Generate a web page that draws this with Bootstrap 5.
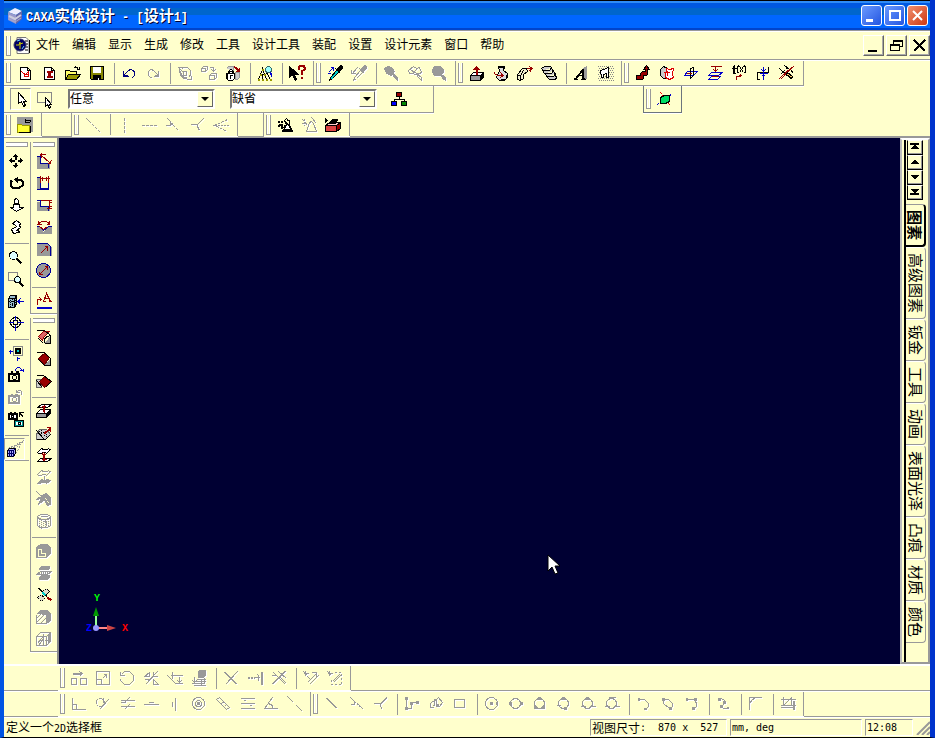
<!DOCTYPE html>
<html lang="zh-CN">
<head>
<meta charset="utf-8">
<meta name="viewport" content="width=device-width, initial-scale=1">
<title>CAXA实体设计 - [设计1]</title>
<link href="https://cdn.jsdelivr.net/npm/bootstrap@5.3.0/dist/css/bootstrap.min.css" rel="stylesheet">
<style>
:root{--face:#ffffcc;--line:#999;--navy:#000033}
body{background:var(--face);color:#000;font:12px/16px "Liberation Sans","Noto Sans CJK SC",sans-serif}
.shell{border-left:4px solid #0054e3;border-right:5px solid #0033cc;border-bottom:1px solid #000}
.titlebar{height:30px;margin:0 -5px 0 -4px;padding:0 7px 0 6px;border-top:1px solid #000;background:linear-gradient(#2f8cf5 0 2px,#0058e0 2px 7px,#0066cc 7px 14px,#0066ff 14px 27px,#0044cc 27px)}
.titlebar h1{font:bold 15px/18px "Noto Sans CJK SC",sans-serif;color:#fff;text-shadow:1px 1px #003;white-space:pre;padding-top:2px;margin:0 0 0 2px}
.titlebar h1 span{font-family:"Liberation Mono",monospace;font-size:12px}
.tight{gap:2px}
.wbtn{width:21px;height:21px;padding:0;border:1px solid #fff;border-radius:3px;background:linear-gradient(135deg,#6a9aff,#2455e0)}
.wbtn.red{background:linear-gradient(135deg,#f09070,#d03810)}
.wbtn svg,.mbtn svg{display:block;width:19px;height:19px;fill:none;stroke:#fff;stroke-width:2;shape-rendering:crispEdges}
.wbtn.red svg{shape-rendering:auto}
.menubar{height:31px;border-top:1px solid var(--line);border-bottom:1px solid #fff;box-shadow:inset 0 1px #fff,inset 0 -1px var(--line)}
.menubar .nav-link{color:#000;padding:0 6px 2px}
.mbtn{width:21px;height:21px;padding:0;background:var(--face);border:1px solid;border-color:#fff #666 #666 #fff;box-shadow:inset -1px -1px #aaa}
.mbtn svg{stroke:#000}
.band{height:25px;border-right:1px solid var(--line);border-bottom:1px solid var(--line);box-shadow:0 1px #fff;padding-right:4px}
.row-two .band{height:27px}
.row-three .band{height:23px}
.lowbars .band{height:24px;padding-right:3px}
.grip{width:5px;height:20px;margin:0 2px;border:solid var(--line);border-width:0 1px 1px;background:linear-gradient(90deg,#fff 1px,var(--face) 1px 2px,#fff 2px)}
.hgrip{height:5px;margin:4px 2px 3px;border:solid var(--line);border-width:1px 1px 1px 0;background:#fff}
.tb{width:24px;height:24px;padding:0;border:0;background:none;color:#000;display:flex;align-items:center;justify-content:center;flex:none}
.tb:disabled{color:#999}
.tb svg{width:16px;height:16px;overflow:visible;fill:none;stroke:currentColor;shape-rendering:crispEdges}
.tb:disabled svg{filter:drop-shadow(1px 1px 0 #fff)}
.tb .s{fill:currentColor}
.tb .r{stroke:#990000}.tb .b{stroke:#0000cc}
.tb.on{width:21px;height:22px;border:1px solid;border-color:#999 #fff #fff #999}
.vs{width:1px;height:21px;margin:0 2px 0 5px;background:var(--line);flex:none}
.hs{height:1px;margin:5px 1px 2px;background:var(--line);flex:none}
.pickbar{padding:0 22px 0 6px;gap:2px}
.pickbar .combo{margin-left:9px;margin-right:4px}
.combo{width:147px;height:20px;border:2px solid;border-color:#777 #fff #fff #777;background:#fff;position:relative}
.combo select{appearance:none;border:0;background:#fff;width:100%;height:16px;font:inherit;line-height:16px;padding:0 20px 0 0;color:#000;outline:0}
.combo .arr{position:absolute;right:0;top:0;width:16px;height:16px;background:var(--face);border:1px solid;border-color:#fff #666 #666 #fff;pointer-events:none}
.combo .arr::after{content:"";position:absolute;left:3px;top:5px;border:4px solid transparent;border-top-color:#000;border-bottom:0}
.space-a{flex:21}.space-b{flex:25}
.topbars{border-bottom:2px solid var(--line)}
.gap-cell{width:30px;border-right:1px solid var(--line)}
.gap-cell.slim{width:26px}
.vcol .tb{height:22px;margin:0 auto}
.vcol.one{width:26px}.vcol.two{width:29px;border-right:2px solid #888}
.vcol.one .tb{margin:0}
.vcol.one .hs{margin-top:5px}
.vband{border-left:1px solid var(--line);border-bottom:1px solid var(--line);padding-bottom:1px;box-shadow:0 1px #fff}
.work{min-height:0}
.stage{background:var(--navy);position:relative;min-width:0}
.stage .axis{position:absolute;left:27px;bottom:26px;width:45px;height:48px}
.stage .ptr{position:absolute;left:58%;top:79%;width:14px;height:22px}
.side{width:30px;border:2px solid;border-color:#fff #999 #999 #bbb;padding:0 2px}
.side-in{border-left:2px solid #000}
.sbtn{width:16px;height:15px;margin-left:1px;padding:0;border:1px solid #000;border-top-color:#fff;background:var(--face);box-shadow:inset -1px -1px #999;display:block}
.sbtn svg{display:block;width:14px;height:13px;fill:#000;shape-rendering:crispEdges}
.vtab{writing-mode:vertical-rl;text-orientation:sideways;width:20px;margin:0;padding:5px 0;border:1px solid var(--line);border-left:0;border-top-color:#fff;border-radius:0 4px 4px 0;background:var(--face);font:15px/18px "Noto Sans CJK SC",sans-serif;color:#000;white-space:nowrap}
.vtab.active{font-weight:bold;border-width:1px 2px 2px 0;border-color:#999 #000 #000}
.lowbars{padding-left:54px}
.lowtop{border-top:2px solid #fff}
.rule{height:2px;background:linear-gradient(var(--line) 50%,#fff 50%)}
.status{height:19px;padding-left:2px}
.status,.cell{font-family:"DejaVu Sans Mono","Noto Sans CJK SC",monospace;font-size:10px}
.status b{font:12px/15px "Noto Sans CJK SC",sans-serif}
.cell{border:1px solid;border-color:#999 #fff #fff #999;height:17px;line-height:15px;padding-left:1px;white-space:pre;margin-right:3px;display:flex;align-items:center}
.c1{width:137px}.c2{width:132px}.c3{width:48px}
</style>
<script src="https://cdn.jsdelivr.net/npm/bootstrap@5.3.0/dist/js/bootstrap.bundle.min.js"></script>
</head>
<body>
<div class="shell vh-100 d-flex flex-column overflow-hidden">
<header class="titlebar d-flex align-items-center flex-shrink-0">
<svg width="18" height="18" viewBox="0 0 18 18" aria-hidden="true"><path fill="#eef" d="M2 5l7-4 7 3-6 4z"/><path fill="#99c" d="M2 5l8 3v9l-8-4z"/><path fill="#66a" d="M10 8l6-4v8l-6 5z"/><path fill="none" stroke="#ccd" stroke-width="2" d="M3 9l6 3 6-4"/><path fill="none" stroke="#aac" d="M3 12l6 3 6-4"/></svg>
<h1><span>CAXA</span>实体设计<span> - [</span>设计<span>1]</span></h1>
<div class="d-flex tight ms-auto">
<button class="wbtn" aria-label="最小化"><svg viewBox="0 0 19 19"><path stroke-width="3" d="M4 14h7"/></svg></button>
<button class="wbtn" aria-label="最大化"><svg viewBox="0 0 19 19"><path d="M4 5h11v9H5V5"/></svg></button>
<button class="wbtn red" aria-label="关闭"><svg viewBox="0 0 19 19"><path d="M5 5l9 9M14 5l-9 9"/></svg></button>
</div>
</header>
<nav class="menubar d-flex align-items-center flex-shrink-0">
<span class="grip"></span>
<svg width="17" height="17" viewBox="0 0 17 17" aria-hidden="true"><path fill="#fff" stroke="#777" d="M4 .5h9l3 3v13H4z"/><path stroke="#000" d="M12 4h3M13 7h2M13 10h2M12 13h3M16.500 3v13"/><circle cx="7" cy="8" r="6" fill="#006" stroke="#336"/><path fill="none" stroke="#cc0" d="M3 8h3l1-3v7M7 7l3-1"/><path stroke="#6cf" d="M4 4l3-1M9 12l2-3"/></svg>
<ul class="nav flex-nowrap ps-0 m-0">
<li><a class="nav-link" href="#">文件</a></li><li><a class="nav-link" href="#">编辑</a></li><li><a class="nav-link" href="#">显示</a></li><li><a class="nav-link" href="#">生成</a></li><li><a class="nav-link" href="#">修改</a></li><li><a class="nav-link" href="#">工具</a></li><li><a class="nav-link" href="#">设计工具</a></li><li><a class="nav-link" href="#">装配</a></li><li><a class="nav-link" href="#">设置</a></li><li><a class="nav-link" href="#">设计元素</a></li><li><a class="nav-link" href="#">窗口</a></li><li><a class="nav-link" href="#">帮助</a></li>
</ul>
<div class="d-flex ms-auto tight">
<button class="mbtn" aria-label="最小化文档"><svg viewBox="0 0 19 19"><path d="M4 15h9"/></svg></button>
<button class="mbtn" aria-label="还原文档"><svg viewBox="0 0 19 19"><path stroke-width="1" d="M6.500 8V4.500h9v6h-3M6 5.500h9M3.500 8.500h9v6h-9zM3 9.500h9"/></svg></button>
<button class="mbtn" aria-label="关闭文档"><svg viewBox="0 0 19 19"><path d="M4 4l11 11M15 4L4 15"/></svg></button>
</div>
</nav>

<div class="topbars flex-shrink-0">
<div class="d-flex">
<div class="band d-flex align-items-center" role="toolbar" aria-label="标准">
<span class="grip"></span>
<button class="tb" aria-label="新建设计"><svg viewBox="-.5 -.5 16 16"><path fill="#fff" d="M3 2h7l3 3v9H3zM10 2v3h3"/><path stroke="#d00" d="M4 6l2 2 2 1M6 8l2 3h3V6l-4 4M7 9h4M6 11h4"/></svg></button>
<button class="tb" aria-label="新建图纸"><svg viewBox="-.5 -.5 16 16"><path fill="#fff" d="M3 2h7l3 3v9H3zM10 2v3h3"/><path class="r" d="M5 6h6M5 7h6M7 7v5M8 7v5M9 7v5M5 12h6M5 11h6"/></svg></button>
<button class="tb" aria-label="打开"><svg viewBox="-.5 -.5 16 16"><path fill="#ff6" d="M0 14V5h4l1 1h6v3"/><path fill="#990" d="M0 14l3-5h12l-4 5z"/><path d="M8 3c2-3 4-1 5 1M14 1v3h-3"/></svg></button>
<button class="tb" aria-label="保存"><svg viewBox="-.5 -.5 16 16"><path fill="#880" d="M1 1h13v13H2l-1-1z"/><path fill="#fff" stroke="#fff" d="M4 2h7v5H4z"/><path class="s" d="M4 10h7v4H4z"/><path stroke="#fff" d="M9 12v2"/></svg></button>
<span class="vs"></span>
<button class="tb" aria-label="撤销"><svg viewBox="-.5 -.5 16 16"><path stroke="#000080" d="M2 5v6h5M2 10l5-5c3-2 6 0 6 3s-1 4-3 4M3 8v2h3"/></svg></button>
<button class="tb" disabled aria-label="重做"><svg viewBox="-.5 -.5 16 16"><path d="M13 5v6H8M13 10L8 5C5 3 3 5 3 8s1 4 3 4M12 8v2H9"/></svg></button>
<span class="vs"></span>
<button class="tb" disabled aria-label="更新"><svg viewBox="-.5 -.5 16 16"><path d="M5 3c4-3 8 0 8 4s-1 4-2 5M3 6c-1 5 3 8 7 7M4 7c0 4 3 6 6 5M1 2h5M2 2v5M1 2l5 5M14 14h-5M14 14v-4M6 6h3v4H6z"/></svg></button>
<button class="tb" disabled aria-label="复制零件"><svg viewBox="-.5 -.5 16 16"><path d="M0 3l2-2h4v3L4 6H0zM0 3h4v3M8 10l2-2h5v4l-2 2H8zM8 10h5v4M8 2h4v3M10 4l2 2 2-2"/></svg></button>
<button class="tb" aria-label="锁定"><svg viewBox="-.5 -.5 16 16"><path stroke="#999" fill="#ccc" d="M1 3l2-2h5v5M10 7h4v5l-2 2h-2z"/><path fill="#fff" d="M1 8h8v5l-2 2H3l-2-2zM3 8V6l2-2h1l2 2v2M4 8V6h3v2M2 8v5M4 10h3M5 10v3"/><path class="r" d="M9 2l5 4M14 2v4h-4M9 1l5 4"/></svg></button>
<span class="vs"></span>
<button class="tb" aria-label="查找"><svg viewBox="-.5 -.5 16 16"><path d="M5 1v3L1 14M5 4l4 10M3 9h4M5 9v5M10 9l-2-4M10 9l3 5"/><path stroke="#990" stroke-width="2" stroke-dasharray="2 2" d="M0 14h14M2 9h8M4 4h2"/><circle cx="11" cy="4" r="3" fill="#9ff" stroke="#366"/><path class="b" d="M13 7l1 4M14 7v4"/></svg></button>
<span class="vs"></span>
<button class="tb" aria-label="帮助"><svg viewBox="-.5 -.5 16 16"><path class="s" d="M0 1v11l3-3 3 6 1-1-2-5h4z"/><path class="r" stroke-width="2" d="M9 4V2l2-2h3l1 2v2l-3 2v3M12 11v2"/></svg></button>
</div>
<div class="band d-flex align-items-center" role="toolbar" aria-label="吸管">
<span class="grip"></span>
<button class="tb" aria-label="提取效果"><svg viewBox="-.5 -.5 16 16"><path class="s" d="M9 4l4-4 2 1v2l-4 4zM8 3l5 5"/><path fill="#0cc" d="M9 5l-6 7-1 3 3-2 6-6"/><path class="b" d="M1 7l5-5M3 2h3v3M0 8h3"/></svg></button>
<button class="tb" disabled aria-label="应用效果"><svg viewBox="-.5 -.5 16 16"><path class="s" d="M9 4l4-4 2 1v2l-4 4zM8 3l5 5"/><path d="M9 5l-6 7-1 3 3-2 6-6M0 4v4h4M6 2L1 8"/></svg></button>
<span class="vs"></span>
<button class="tb" disabled aria-label="选项一"><svg viewBox="-.5 -.5 16 16"><path class="s" d="M1 3l3-2 4 1 3 4-3 4-5-2zM9 8l5 4v3l-4-4z"/></svg></button>
<button class="tb" disabled aria-label="选项二"><svg viewBox="-.5 -.5 16 16"><path d="M1 5l5-4 3 2 3-1 2 5-4 2-8-1zM4 5l7 4M10 3l-5 5M9 8l5 4v3l-4-4z"/></svg></button>
<button class="tb" disabled aria-label="选项三"><svg viewBox="-.5 -.5 16 16"><path class="s" d="M3 1h6l3 3v3l-3 3H3L1 7V4zM10 9l4 3v3l-3-2z"/></svg></button>
</div>
<div class="band d-flex align-items-center" role="toolbar" aria-label="特征生成">
<span class="grip"></span>
<button class="tb" aria-label="拉伸"><svg viewBox="-.5 -.5 16 16"><path fill="#999" d="M1 10h10v5H1z"/><path fill="#fff" d="M1 10l3-3h10l-3 3z"/><path class="s" d="M11 10l3-3v5l-3 3"/><path class="r" stroke-width="2" d="M7 9V1"/><path class="r" d="M4 4l3-3 3 3zM5 3h4"/></svg></button>
<button class="tb" aria-label="旋转"><svg viewBox="-.5 -.5 16 16"><path fill="#ddd" d="M5 1h6l-1 4 4 3v4l-3 3H6l-3-3 3-7z"/><path d="M5 2h6M13 9v4M7 14h5"/><path class="r" d="M1 6v2l3 2h6M7 7l3 3-3 2M8 8v3"/></svg></button>
<button class="tb" aria-label="扫描"><svg viewBox="-.5 -.5 16 16"><path fill="#eec" d="M0 14V9l5-6h4l1 3-4 3v4l-3 2z"/><path d="M3 14v-4l3-5M1 10l3 1"/><path class="r" d="M9 3h6M13 1v5M12 1l3 2-3 2"/></svg></button>
<button class="tb" aria-label="放样"><svg viewBox="-.5 -.5 16 16"><path fill="#ccc" d="M0 3l3-2h6l5 8 1 4-2 1H8L3 8zM1 5h7l2-3M3 8h7l2-3M6 11h6l2-3"/></svg></button>
<span class="vs"></span>
<button class="tb" aria-label="文字"><svg viewBox="-.5 -.5 16 16"><path fill="#999" stroke="#999" d="M9 4l4-3v12h-3z"/><path d="M2 13L9 4v9M3 13l7-9v9M5 10h4M0 14h4M7 14h5M0 13h3M8 13h3"/></svg></button>
<button class="tb" aria-label="布告"><svg viewBox="-.5 -.5 16 16"><path stroke="#888" stroke-dasharray="1 1" d="M0 1h16M1 3h16M0 5h16M1 7h16M0 9h16M1 11h16M0 13h16M1 15h16"/><path fill="#fff" d="M3 5l3-1 5-2v10H9V8L6 9v3H4z"/></svg></button>
</div>
<div class="band d-flex align-items-center" role="toolbar" aria-label="三维曲线">
<span class="grip"></span>
<button class="tb" aria-label="管道"><svg viewBox="-.5 -.5 16 16"><path fill="#900" d="M1 10h4V8l2-2h3V4H8l3-4 3 4h-2v5l-1 1H8v3l-1 1H1z"/></svg></button>
<button class="tb" aria-label="曲面"><svg viewBox="-.5 -.5 16 16"><path fill="#ccc" d="M1 4l3-3 4 2v9l-4 1-3-3z"/><path fill="#fff" stroke="#d00" d="M7 3l3 1 4-1-1 6 1 3-4 2-4-2zM4 7h6M8 5v5"/></svg></button>
<button class="tb" aria-label="基准面"><svg viewBox="-.5 -.5 16 16"><path class="b" d="M4 6h10l-4 4H1z"/><path d="M7 2v11M7 3l3-1v8l-3 3"/><path class="r" d="M3 8h5"/></svg></button>
<button class="tb" aria-label="投影面"><svg viewBox="-.5 -.5 16 16"><path class="r" d="M3 1h11M8 1v6M6 4l2 2 2-2"/><path class="b" d="M4 7h11l-4 3H1zM4 11h9l-3 3H1z"/><path class="r" d="M4 11h7"/></svg></button>
<button class="tb" aria-label="公式曲线"><svg viewBox="-.5 -.5 16 16"><path d="M2 8V1l2-1M3 8V1M0 3h5M1 8h3M7 0L6 2v4l1 2M8 1l4 6M12 1L8 7M13 0l1 2v4l-1 2"/><path class="r" d="M5 14v-3h4v-2M7 11l2-2 2 2"/></svg></button>
<button class="tb" aria-label="曲线插值"><svg viewBox="-.5 -.5 16 16"><path d="M2 14V7h11V1M1 14h3"/><path class="b" d="M8 1v13M6 4l2 2 2-2M6 11l2-2 2 2M4 8h8"/></svg></button>
<button class="tb" aria-label="裁剪曲线"><svg viewBox="-.5 -.5 16 16"><path stroke-dasharray="3 1" d="M0 3l12 11M5 0l10 8M1 9l7-7"/><path class="r" d="M0 13L13 1M1 14L14 1"/><path fill="#fc6" d="M8 7l5 4-1 2-5-4z"/></svg></button>
</div>
</div>

<div class="d-flex align-items-start row-two">
<div class="band pickbar d-flex align-items-center" role="toolbar" aria-label="选择">
<button class="tb on" aria-label="选择"><svg viewBox="-.5 -.5 16 16"><path fill="#fff" d="M5 1v11l3-2 2 5 2-1-2-4h3z"/></svg></button>
<button class="tb" aria-label="框选"><svg viewBox="-.5 -.5 16 16"><path stroke="#888" d="M0 1h14v10H0z"/><path fill="#fff" d="M8 6v9l2-2 2 4 1-1-1-3h2z"/></svg></button>
<div class="combo"><select aria-label="选择过滤"><option>任意</option></select><span class="arr"></span></div>
<div class="combo"><select aria-label="样式"><option>缺省</option></select><span class="arr"></span></div>
<button class="tb ms-1" aria-label="设计树"><svg viewBox="-.5 -.5 16 16"><path d="M8 5v3M3 11V8h10v3"/><path fill="#900" d="M5 1h5v4H5z"/><path fill="#00f" d="M0 10h5v4H0z"/><path fill="#080" d="M10 10h5v4h-5z"/></svg></button>
</div>
<div class="space-a"></div>
<div class="band border-start border-secondary d-flex align-items-center" role="toolbar" aria-label="工作面">
<span class="grip"></span>
<button class="tb" aria-label="工作面"><svg viewBox="-.5 -.5 16 16"><path class="b" stroke-dasharray="2 1" d="M0 13L15 2"/><path stroke="#f00" stroke-dasharray="2 1" d="M3 1l10 13"/><path fill="#0d6" d="M3 6l4-2h5v6l-4 2H3z"/></svg></button>
</div>
<div class="space-b"></div>
</div>

<div class="d-flex row-three">
<div class="band border-bottom-0 d-flex align-items-center" role="toolbar" aria-label="零件库">
<span class="grip"></span>
<button class="tb" aria-label="零件库"><svg viewBox="-.5 -.5 16 16"><path fill="#999" stroke="#999" d="M0 0h15v14H0z"/><path fill="#ff3" stroke="#990" d="M0 7h4l1 1h7v7H0z"/><path d="M8 4c2-2 5-2 6 1M8 1v4h4M13 8v7H1"/></svg></button>
</div>
<span class="gap-cell"></span>
<div class="band border-bottom-0 d-flex align-items-center" role="toolbar" aria-label="捕捉">
<span class="grip"></span>
<button class="tb" disabled aria-label="直线"><svg viewBox="-.5 -.5 16 16"><path stroke-dasharray="3 1" d="M1 1l14 14"/></svg></button>
<span class="vs"></span>
<button class="tb" disabled aria-label="竖直"><svg viewBox="-.5 -.5 16 16"><path stroke-dasharray="3 1" d="M7 0v16"/></svg></button>
<button class="tb" disabled aria-label="水平"><svg viewBox="-.5 -.5 16 16"><path stroke-dasharray="3 1" d="M0 8h16"/></svg></button>
<button class="tb" disabled aria-label="切线"><svg viewBox="-.5 -.5 16 16"><path d="M2 1l3 3v4M0 8h5l2-2"/><path stroke-dasharray="3 1" d="M5 5l9 9"/></svg></button>
<button class="tb" disabled aria-label="法线"><svg viewBox="-.5 -.5 16 16"><path d="M14 1L8 7H1M8 7v2l2 4"/></svg></button>
<button class="tb" disabled aria-label="角平分"><svg viewBox="-.5 -.5 16 16"><path stroke-dasharray="3 1" d="M14 2L1 8l13 6"/><path stroke-dasharray="2 1" d="M1 8h15"/></svg></button>
</div>
<span class="gap-cell slim"></span>
<div class="band border-bottom-0 d-flex align-items-center" role="toolbar" aria-label="动画">
<span class="grip"></span>
<button class="tb" aria-label="打开动画"><svg viewBox="-.5 -.5 16 16"><path stroke-dasharray="2 1" stroke-width="2" d="M1 4l5 7M0 8h7M4 3v8"/><path d="M9 1L7 3l2 4-4 7h10l-3-6V4l-3-3zM6 13h9M9 3h3M8 4l3 3"/><path fill="#fff" d="M9 7h2l2 5H7z"/></svg></button>
<button class="tb" disabled aria-label="播放动画"><svg viewBox="-.5 -.5 16 16"><path stroke-dasharray="2 1" d="M1 2l5 6M0 6h6M3 1v7"/><path d="M10 0l5 6M8 5l2-1 2 2 3 8H5z"/></svg></button>
<button class="tb" aria-label="零件分析"><svg viewBox="-.5 -.5 16 16"><path class="s" d="M0 1l2 2-2 2z"/><path fill="#d44" d="M0 8h11v6H0z"/><path fill="#900" d="M11 8l4-3v6l-4 3z"/><path fill="#fcc" d="M0 8l4-3h11l-4 3z"/><path class="s" d="M4 6l3-4h5l-2 4z"/></svg></button>
</div>
</div>
</div>

<main class="work d-flex flex-grow-1">
<div class="vcol one" role="toolbar" aria-label="视向">
<div class="hgrip"></div>
<button class="tb" aria-label="平移"><svg viewBox="-.5 -.5 16 16"><path class="s" d="M7 1L5 3h4zM7 14l-2-2h4zM1 7l2-2v4zM14 7l-2-2v4z"/><path stroke-width="2" d="M7 2v4M7 9v4M2 7h4M9 7h4"/></svg></button>
<button class="tb" aria-label="旋转视图"><svg viewBox="-.5 -.5 16 16"><path stroke-width="2" d="M4 5L2 6v4l2 2h7l3-2V6l-2-2H8"/><path class="s" d="M9 2v5L6 4z"/></svg></button>
<button class="tb" aria-label="前后移动"><svg viewBox="-.5 -.5 16 16"><path fill="#fff" d="M6 3l1-2h1l2 2v3H6zM5 7h6v3h4l-7 4-6-4h3z"/></svg></button>
<button class="tb" aria-label="漫步"><svg viewBox="-.5 -.5 16 16"><path fill="#fff" d="M8 1l4 3-1 2 1 2-4 3h2l1 2-6 1-2-4 5-3-2-2-2-1z"/></svg></button>
<div class="hs"></div>
<button class="tb" aria-label="缩放"><svg viewBox="-.5 -.5 16 16"><circle cx="5" cy="6" r="4" fill="#dff"/><path stroke-width="2" d="M8 9l5 5"/></svg></button>
<button class="tb" aria-label="窗口缩放"><svg viewBox="-.5 -.5 16 16"><path stroke="#888" d="M0 1h9v8H0z"/><circle cx="9" cy="8" r="3" fill="#dff"/><path stroke-width="2" d="M11 11l4 4"/></svg></button>
<button class="tb" aria-label="指定面"><svg viewBox="-.5 -.5 16 16"><path fill="#9bc" d="M0 5l2-3h6v9l-2 3H0z"/><path stroke-dasharray="1 1" d="M2 6v8M4 5v8M7 4v9M0 8h6M1 11h6"/><path d="M0 5h6v9M6 5l2-3"/><path class="b" d="M9 8h6M12 5L9 8l3 3M11 6v4"/></svg></button>
<button class="tb" aria-label="视向中心"><svg viewBox="-.5 -.5 16 16"><circle cx="7" cy="7" r="5"/><path d="M5 5h4v4H5z"/><path class="b" d="M7 0v5M7 9v6M0 7h5M9 7h6"/></svg></button>
<div class="hs"></div>
<button class="tb" aria-label="全部显示"><svg viewBox="-.5 -.5 16 16"><path stroke="#888" d="M5 1h9v9H5z"/><path class="s" d="M7 3h5v5H7z"/><path stroke="#0cc" d="M8 5h2M8 6h2"/><path class="b" d="M0 6h4M2 4v4M9 11v4M8 13h3"/></svg></button>
<button class="tb" aria-label="保存视向"><svg viewBox="-.5 -.5 16 16"><path d="M0 6h11v8H0zM1 7h9v6H1zM2 4h2M7 4h3M2 5h2M7 5h3"/><circle cx="6" cy="10" r="2"/><path class="b" d="M7 3c0-4 6-4 6 0M11 3h4M15 1v3"/></svg></button>
<button class="tb" disabled aria-label="恢复视向"><svg viewBox="-.5 -.5 16 16"><path d="M0 6h11v8H0zM1 7h9v6H1zM2 5h2M6 5h3"/><circle cx="6" cy="10" r="2"/><path d="M12 6c4-4-1-7-4-3M8 0v3h3"/></svg></button>
<button class="tb" aria-label="复制视向"><svg viewBox="-.5 -.5 16 16"><path fill="#fff" d="M0 2h9v6H0zM1 3h7v4H1zM6 9h9v6H6zM1 1h2M5 1h2"/><circle cx="4" cy="5" r="1"/><path stroke="#099" d="M7 10h7v4H7z"/><circle cx="11" cy="12" r="1"/><path d="M11 1h4M11 1v4M11 1l4 5"/></svg></button>
<div class="hs"></div>
<button class="tb on" aria-label="透视"><svg viewBox="-.5 -.5 16 16"><path stroke="#999" stroke-dasharray="2 1" d="M1 7l14-7-7 13M3 8L14 1M7 8l8-8"/><path fill="#aaf" d="M0 9l2-2h6v5l-2 3H0z"/><path stroke="#006" d="M0 9h6v6M6 9l2-2M2 9v6M4 9v6M0 12h6"/></svg></button>
<div class="hs mt-0"></div>
</div>
<div class="vcol two">
<div class="vband" role="toolbar" aria-label="智能标注">
<div class="hgrip"></div>
<button class="tb" aria-label="线性标注"><svg viewBox="-.5 -.5 16 16"><path fill="#999" stroke="none" d="M0 3h4v7h9v5H0z"/><path stroke="#009" d="M0 3h4v7h8v4"/><path class="r" d="M5 2l8 7M5 4V1h4M14 7v3h-3M3 3l2-3M12 11l3-4"/></svg></button>
<button class="tb" aria-label="水平标注"><svg viewBox="-.5 -.5 16 16"><path fill="#999" stroke="none" d="M0 2h4v11H0z"/><path stroke="#009" d="M0 2h3M4 5v8h8V4M0 14h12"/><path class="r" d="M4 0v7M12 0v7M4 3h9M6 1v4M10 1v4"/></svg></button>
<button class="tb" aria-label="竖直标注"><svg viewBox="-.5 -.5 16 16"><path fill="#999" stroke="none" d="M0 4h4v5h9v4H0z"/><path stroke="#009" d="M0 3h4v6h8v4"/><path class="r" d="M4 3h11M10 11h5M13 3v8M12 5h3M12 9h3"/></svg></button>
<button class="tb" aria-label="角度标注"><svg viewBox="-.5 -.5 16 16"><path fill="#999" stroke="none" d="M0 7h3l4 5 5-5h3v7H0z"/><path stroke="#009" d="M0 7h3l4 4 5-4h3"/><path class="r" d="M1 5l4-3h5l4 3M2 1v4h3M13 1v4h-3M3 7l4 3 4-3"/></svg></button>
<button class="tb" aria-label="半径标注"><svg viewBox="-.5 -.5 16 16"><path fill="#999" stroke="none" d="M0 2h11l4 4v8H0z"/><path stroke="#009" d="M0 2h11l3 3v9"/><path class="r" d="M4 12l7-7M8 5h3v4"/></svg></button>
<button class="tb" aria-label="直径标注"><svg viewBox="-.5 -.5 16 16"><circle cx="7" cy="7" r="7" fill="#999" stroke="#009"/><path class="r" d="M3 11l8-8M8 3h3v3M3 8v3h3"/></svg></button>
<div class="hs"></div>
<button class="tb" aria-label="文字标注"><svg viewBox="-.5 -.5 16 16"><path class="r" d="M7 8l3-8 4 8M8 5h5M6 8h3M12 8h3M1 11V6h4M3 4l2 2-2 2"/><path class="b" stroke-width="2" d="M0 14h15"/></svg></button>
</div>
<div class="vband" role="toolbar" aria-label="面编辑">
<div class="hgrip"></div>
<button class="tb" aria-label="圆角过渡"><svg viewBox="-.5 -.5 16 16"><path fill="#999" stroke="none" d="M8 14l6-8v8z"/><path fill="#d66" stroke="#900" d="M2 7l5-5h6l-6 6-1 3z"/><path d="M0 1h8l6 5v8H8M8 14c-1-6 2-7 6-8M2 9l5 5"/></svg></button>
<button class="tb" aria-label="倒角"><svg viewBox="-.5 -.5 16 16"><path fill="#999" stroke="none" d="M8 14l6-7v7z"/><path fill="#900" stroke="#600" d="M2 7l6-5 5 4-5 7z"/><path d="M0 1h8l6 6v7H8L2 8"/></svg></button>
<button class="tb" aria-label="面拔模"><svg viewBox="-.5 -.5 16 16"><path fill="#ccc" stroke="#666" d="M0 6h5v8H0z"/><path fill="#900" stroke="#600" d="M8 3l6 5-6 6-5-6z"/><path d="M0 2h7l8 6-6 6M0 7l6 7"/></svg></button>
<div class="hs"></div>
<button class="tb" aria-label="移动面"><svg viewBox="-.5 -.5 16 16"><path fill="#999" d="M0 10h10v4H0z"/><path class="s" d="M10 10l4-4v4l-4 4z"/><path fill="#fff" d="M0 10l4-4h10l-4 4zM1 4l4-3h10l-4 3z"/><path class="r" d="M8 9V2M7 8V3M5 4l3-2 2 2"/></svg></button>
<button class="tb" aria-label="拔模斜面"><svg viewBox="-.5 -.5 16 16"><path fill="#ccc" stroke="#666" d="M0 9l3-5h7l4 5-5 5H0z"/><path d="M0 5l8 9M0 14h9l5-5"/><path stroke-dasharray="1 1" d="M3 6l8 6M5 5l7 6"/><path class="r" stroke-width="2" d="M8 8l6-5"/><path class="r" d="M10 2h4v4"/></svg></button>
<button class="tb" aria-label="匹配面"><svg viewBox="-.5 -.5 16 16"><path fill="#fff" d="M1 5l4-4c4 3 6-1 9 1l-4 4c-3-3-6 2-9-1zM1 14l3-3h11l-4 3z"/><path class="r" d="M8 13V5M7 13V6M5 8l2-3 3 3M5 12h5"/></svg></button>
<button class="tb" disabled aria-label="等距面"><svg viewBox="-.5 -.5 16 16"><path d="M1 5l4-4c4 3 6-1 9 1l-4 4c-3-3-6 2-9-1z"/><path class="s" d="M1 14l4-4c4 2 6-1 9 1l-4 3c-3-3-6 1-9 0zM7 7h1v3"/></svg></button>
<button class="tb" disabled aria-label="删除面"><svg viewBox="-.5 -.5 16 16"><path class="s" d="M5 4l5-2 4 4v7l-3 1-3-6-6 5 3-6-5 1 4-3z"/><path d="M0 0l5 5"/><path stroke="#ffffcc" stroke-dasharray="2 1" d="M9 7l4 6"/></svg></button>
<button class="tb" disabled aria-label="编辑面半径"><svg viewBox="-.5 -.5 16 16"><path d="M1 3l3-2h7l3 2v9l-3 2H4l-3-2zM1 4l4 2h5l4-2M4 3h7M6 8h4v4"/><path stroke-dasharray="1 1" d="M3 5v9M5 6v9M7 7v8M9 6v8M12 5v8"/></svg></button>
<div class="hs"></div>
<button class="tb" disabled aria-label="抽壳"><svg viewBox="-.5 -.5 16 16"><path class="s" d="M0 4l4-3h7l3 3v6l-4 4H0z"/><path stroke="#ffffcc" d="M2 6h3v4h4v3H2z"/></svg></button>
<button class="tb" disabled aria-label="分割零件"><svg viewBox="-.5 -.5 16 16"><path class="s" d="M3 3l2-2h8v2l-2 1H3zM3 12l2-2h8v2l-2 2H3z"/><path d="M0 9l4-3h11l-4 3z"/><path stroke-dasharray="1 1" d="M2 8h10M4 7h9"/></svg></button>
<button class="tb" aria-label="裁剪"><svg viewBox="-.5 -.5 16 16"><path fill="#ddc" stroke-dasharray="2 1" d="M6 4l4-3 3 3-4 4zM1 10l4-3 3 4-3 3z"/><path d="M2 1l9 9M3 1l8 8"/><path stroke="#0cc" stroke-width="2" d="M6 5l3 3"/><path class="r" stroke-width="2" d="M11 10l4 3"/></svg></button>
<button class="tb" disabled aria-label="零件截面"><svg viewBox="-.5 -.5 16 16"><path class="s" d="M1 4l3-3h7l3 3v7l-4 3V5z"/><path d="M0 5v9h9M0 9l4-4M0 13l8-8M4 14l6-6"/></svg></button>
<button class="tb" disabled aria-label="拉伸零件"><svg viewBox="-.5 -.5 16 16"><path d="M0 5l4-4h10v9l-4 4H0zM0 5h10v9M10 5l4-4M1 12l5-6M2 14l5-7M7 2v12M8 9h4"/><path class="s" d="M12 3l2-2v9l-2 2z"/></svg></button>
</div>
</div>
<div class="stage flex-grow-1">
<svg class="axis" viewBox="0 0 45 48" font-family="Liberation Mono,monospace" font-size="10" font-weight="bold"><text x="8" y="11" fill="#0f0">Y</text><text x="36" y="41" fill="#f00">X</text><text x="0" y="41" fill="#00f">Z</text><path stroke="#9f9" stroke-width="2" d="M10 37V26"/><path fill="#090" d="M10 17l3 9H7z"/><path stroke="#f88" stroke-width="2" d="M12 38h10"/><path fill="#c44" d="M21 35l9 3-9 3z"/><circle cx="10" cy="38" r="3" fill="#99f"/></svg>
<svg class="ptr" viewBox="0 0 14 22" aria-hidden="true"><path fill="#fff" stroke="#000" d="M1 1v16l4-4 3 7 3-1-3-7h5z"/></svg>
</div>
<aside class="side d-flex"><div class="side-in flex-grow-1">
<button class="sbtn" aria-label="第一个"><svg viewBox="0 0 14 13"><path d="M2 2h9v2H2zM6 4h1l4 4H2z"/></svg></button>
<button class="sbtn" aria-label="上一个"><svg viewBox="0 0 14 13"><path d="M6 4h1l4 4H2z"/></svg></button>
<button class="sbtn" aria-label="下一个"><svg viewBox="0 0 14 13"><path d="M2 4h9L7 8H6z"/></svg></button>
<button class="sbtn mb-1" aria-label="最后一个"><svg viewBox="0 0 14 13"><path d="M2 3h9L7 7H6zM2 7h9v2H2z"/></svg></button>
<div class="d-flex flex-column" role="tablist">
<button class="vtab active" role="tab">图素</button><button class="vtab" role="tab">高级图素</button><button class="vtab" role="tab">钣金</button><button class="vtab" role="tab">工具</button><button class="vtab" role="tab">动画</button><button class="vtab" role="tab">表面光泽</button><button class="vtab" role="tab">凸痕</button><button class="vtab" role="tab">材质</button><button class="vtab" role="tab">颜色</button>
</div>
</div></aside>
</main>

<div class="flex-shrink-0">
<div class="lowbars lowtop d-flex">
<div class="band border-bottom-0 d-flex align-items-center" role="toolbar" aria-label="二维编辑">
<span class="grip"></span>
<button class="tb" disabled aria-label="移动"><svg viewBox="-.5 -.5 16 16"><path d="M0 8h5v6H0zM9 8h6v6H9z"/><path d="M1 3h9M1 4h9M8 1l3 2-3 3"/></svg></button>
<button class="tb" disabled aria-label="比例"><svg viewBox="-.5 -.5 16 16"><path d="M1 1h13v13H1zM1 9h5v5M7 8l4-4M8 4h3v3"/></svg></button>
<button class="tb" disabled aria-label="旋转曲线"><svg viewBox="-.5 -.5 16 16"><path d="M2 4l3-3h5l4 4v5l-4 4H5l-4-4V8M1 1v4h4"/></svg></button>
<button class="tb" disabled aria-label="镜像"><svg viewBox="-.5 -.5 16 16"><path d="M1 6l5-4v4zM10 9l5 5h-5zM2 14L14 1M9 6h5M1 9h5M10 1v4"/></svg></button>
<button class="tb" disabled aria-label="等距"><svg viewBox="-.5 -.5 16 16"><path d="M0 5l8 8h7M5 1v4h10M12 6v6M10 10l2 2 2-2M5 8V5H3"/></svg></button>
<button class="tb" disabled aria-label="投影"><svg viewBox="-.5 -.5 16 16"><path class="s" d="M7 1l2-1h5v5l-2 2H7z"/><path d="M5 9h9M2 11h12M0 13h13M2 15h12M3 6v6M1 10l2 2 2-2M10 8v7M13 7v6"/></svg></button>
<span class="vs"></span>
<button class="tb" disabled aria-label="打断"><svg viewBox="-.5 -.5 16 16"><path d="M2 2l12 12M1 2l12 12M14 1L2 14"/></svg></button>
<button class="tb" disabled aria-label="延伸"><svg viewBox="-.5 -.5 16 16"><path stroke-dasharray="2 1" d="M0 7h7M0 8h7"/><path d="M6 7h6M10 4l2 3-2 3M11 5v5M14 1v13M15 1v13"/></svg></button>
<button class="tb" disabled aria-label="裁剪线"><svg viewBox="-.5 -.5 16 16"><path d="M2 2l12 12M14 1L1 14M13 1L0 14M0 5h4M7 1l8 7M9 7l6 6M8 8l6 6"/></svg></button>
<span class="vs"></span>
<button class="tb" disabled aria-label="显示尺寸"><svg viewBox="-.5 -.5 16 16"><path d="M0 3h5M2 0v5M0 1l4 4M4 12L13 3M6 14l9-9M4 6l4 4M8 2h5v4"/></svg></button>
<button class="tb" disabled aria-label="显示约束"><svg viewBox="-.5 -.5 16 16"><path d="M0 3h5M2 0v5M0 1l4 4M5 11l7-7M6 12l7-7"/><path stroke-dasharray="2 2" d="M7 2h7v12H4V8"/></svg></button>
</div>
</div>
<div class="rule"></div>
<div class="lowbars d-flex">
<div class="band border-bottom-0 d-flex align-items-center" role="toolbar" aria-label="二维约束">
<span class="grip"></span>
<button class="tb" disabled aria-label="垂直"><svg viewBox="-.5 -.5 16 16"><path d="M1 1v12h13M1 8h4v5"/></svg></button>
<button class="tb" disabled aria-label="相切"><svg viewBox="-.5 -.5 16 16"><circle cx="5" cy="6" r="4"/><path d="M4 13l9-10M8 1v5"/></svg></button>
<button class="tb" disabled aria-label="平行"><svg viewBox="-.5 -.5 16 16"><path d="M1 4h14M1 10h14M5 6l5-5M5 13l5-5M1 6h5"/></svg></button>
<button class="tb" disabled aria-label="水平约束"><svg viewBox="-.5 -.5 16 16"><path d="M0 8h15M5 6h5"/></svg></button>
<button class="tb" disabled aria-label="竖直约束"><svg viewBox="-.5 -.5 16 16"><path d="M8 1v13M5 5v5"/></svg></button>
<button class="tb" disabled aria-label="同心"><svg viewBox="-.5 -.5 16 16"><circle cx="7" cy="7" r="6"/><circle cx="7" cy="7" r="3"/><circle class="s" cx="7" cy="7" r="1"/></svg></button>
<button class="tb" disabled aria-label="等长"><svg viewBox="-.5 -.5 16 16"><path d="M1 3l3-2 10 10-3 2zM6 7l3-2M9 10l2-2"/></svg></button>
<button class="tb" disabled aria-label="固定长度"><svg viewBox="-.5 -.5 16 16"><path d="M1 2h14M1 7h14M1 12h14M4 4h2M10 9h2"/></svg></button>
<button class="tb" disabled aria-label="角度"><svg viewBox="-.5 -.5 16 16"><path d="M9 1L1 12h13M5 7l4 2v3"/></svg></button>
<button class="tb" disabled aria-label="共线"><svg viewBox="-.5 -.5 16 16"><path d="M0 0l6 6M9 9l6 6"/></svg></button>
</div>
<div class="band border-bottom-0 d-flex align-items-center" role="toolbar" aria-label="二维绘图">
<span class="grip"></span>
<button class="tb" disabled aria-label="两点线"><svg viewBox="-.5 -.5 16 16"><path d="M2 2l10 10M3 2l10 10"/></svg></button>
<button class="tb" disabled aria-label="切线绘制"><svg viewBox="-.5 -.5 16 16"><path d="M2 1l4 4v3M2 8h4"/><path stroke-dasharray="2 1" d="M6 5l9 8"/></svg></button>
<button class="tb" disabled aria-label="法线绘制"><svg viewBox="-.5 -.5 16 16"><path d="M14 1L8 7H1M14 2L8 8v2l2 3"/></svg></button>
<span class="vs"></span>
<button class="tb" disabled aria-label="连续线"><svg viewBox="-.5 -.5 16 16"><path d="M2 2v10h5V6h6"/><path class="s" d="M1 1h2v2H1zM1 11h2v2H1zM6 6h2v2H6zM12 5h2v2h-2z"/></svg></button>
<button class="tb" disabled aria-label="连续弧"><svg viewBox="-.5 -.5 16 16"><path d="M5 11H2V7l2-2h2v3l-1 2M8 3l2-2 4 5-3 4H8z"/><path class="s" d="M6 3h2v1H6zM8 8h2v2H8z"/></svg></button>
<button class="tb" disabled aria-label="矩形"><svg viewBox="-.5 -.5 16 16"><path d="M2 3h10v8H2z"/></svg></button>
<span class="vs"></span>
<button class="tb" disabled aria-label="圆心圆"><svg viewBox="-.5 -.5 16 16"><circle cx="7" cy="7" r="6"/><path class="s" d="M6 6h2v2H6zM12 6h1v2h-1z"/></svg></button>
<button class="tb" disabled aria-label="两点圆"><svg viewBox="-.5 -.5 16 16"><circle cx="7" cy="7" r="5"/><path class="s" d="M1 6h2v2H1zM12 6h2v2h-2z"/></svg></button>
<button class="tb" disabled aria-label="三点圆"><svg viewBox="-.5 -.5 16 16"><circle cx="7" cy="7" r="5"/><path class="s" d="M6 1h2v2H6zM2 10h2v2H2zM10 10h2v2h-2z"/></svg></button>
<button class="tb" disabled aria-label="一切两点圆"><svg viewBox="-.5 -.5 16 16"><circle cx="7" cy="7" r="5"/><path class="s" d="M6 1h2v2H6zM8 11h2v2H8z"/><path d="M0 9h4"/></svg></button>
<button class="tb" disabled aria-label="两切一点圆"><svg viewBox="-.5 -.5 16 16"><circle cx="7" cy="7" r="5"/><path class="s" d="M6 1h2v2H6z"/><path d="M0 10h5M9 10h6"/></svg></button>
<button class="tb" disabled aria-label="三切圆"><svg viewBox="-.5 -.5 16 16"><circle cx="7" cy="7" r="5"/><path d="M4 1h7M0 10h5M9 10h6"/></svg></button>
<span class="vs"></span>
<button class="tb" disabled aria-label="两点弧"><svg viewBox="-.5 -.5 16 16"><path d="M2 3h6l4 4v3l-3 3"/><path class="s" d="M2 2h1v2H2zM8 12h2v1H8z"/></svg></button>
<button class="tb" disabled aria-label="圆心弧"><svg viewBox="-.5 -.5 16 16"><path d="M3 3h5l4 4v3l-2 2M3 4v3l6 5"/><path class="s" d="M2 2h2v2H2zM9 11h2v2H9z"/></svg></button>
<button class="tb" disabled aria-label="三点弧"><svg viewBox="-.5 -.5 16 16"><path d="M2 3h8l2 4v3l-3 2"/><path class="s" d="M2 2h1v2H2zM10 2h2v2h-2zM8 11h2v2H8z"/></svg></button>
<span class="vs"></span>
<button class="tb" disabled aria-label="样条"><svg viewBox="-.5 -.5 16 16"><path d="M3 3l2-1 3 2v3l-3 3 2 2h5"/><path class="s" d="M2 2h2v2H2zM7 5h2v2H7zM4 9h2v2H4zM11 11h1v1h-1z"/></svg></button>
<span class="vs"></span>
<button class="tb" disabled aria-label="圆角"><svg viewBox="-.5 -.5 16 16"><path d="M1 13V1h12M1 8c1-3 3-6 7-7"/></svg></button>
<span class="vs"></span>
<button class="tb" disabled aria-label="构造线"><svg viewBox="-.5 -.5 16 16"><path d="M0 3h15M3 0v9h8V0M3 9l8-8M0 9h15M0 11h13"/><path class="s" d="M13 5h1v8h-1z"/></svg></button>
</div>
</div>
<div class="rule"></div>
<footer class="status d-flex align-items-center">
<span class="flex-grow-1"><b>定义一个</b>2D<b>选择框</b></span>
<span class="cell c1"><b>视图尺寸</b>:  870 x  527</span>
<span class="cell c2">mm, deg</span>
<span class="cell c3">12:08</span>
<svg width="14" height="14" viewBox="0 0 14 14" stroke="#999" stroke-width="2" aria-hidden="true"><path d="M1 14L14 1M6 14l8-8M11 14l3-3"/></svg>
</footer>
</div>
</div>
</body>
</html>
